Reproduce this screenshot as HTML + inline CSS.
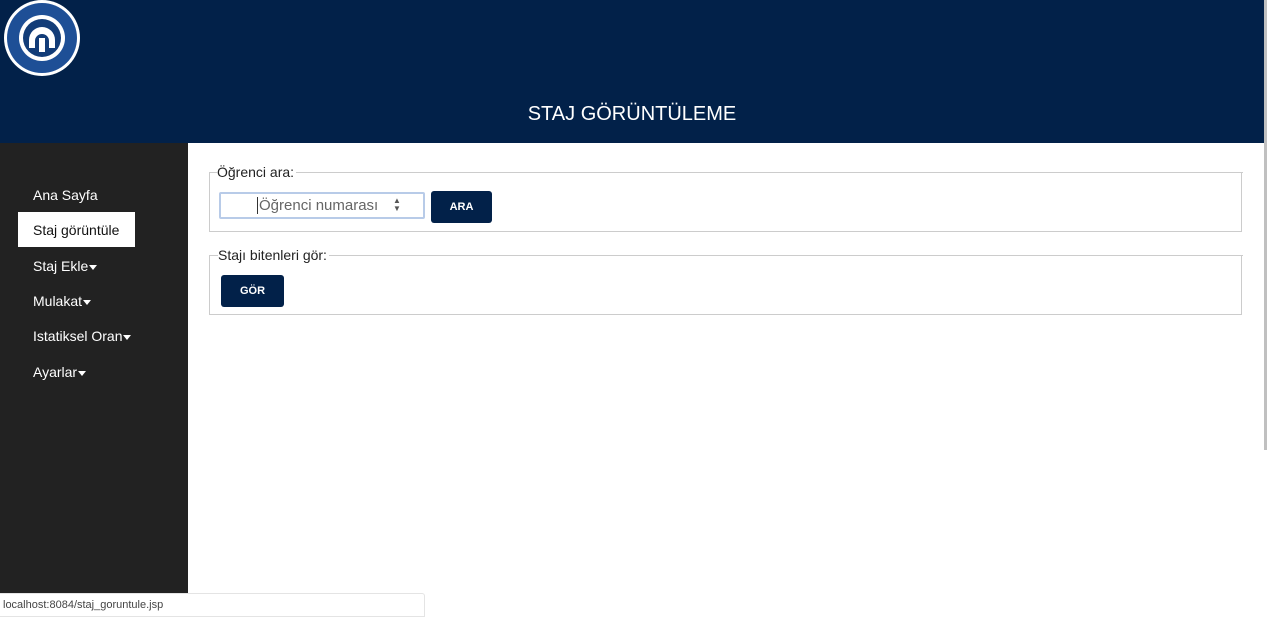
<!DOCTYPE html>
<html><head><meta charset="utf-8"><style>
*{margin:0;padding:0;box-sizing:border-box}
body{width:1278px;height:617px;overflow:hidden;background:#fff;font-family:"Liberation Sans",Arial,sans-serif;position:relative}
.hdr{position:absolute;left:0;top:0;width:1264px;height:143px;background:#022149}
.hdr h1{position:absolute;top:103px;left:0;width:1264px;text-align:center;color:#fff;font-weight:normal;font-size:20px}
.side{position:absolute;left:0;top:143px;width:188px;height:474px;background:#222}
.side div{position:absolute;left:33px;color:#fff;font-size:14px}
.side .act{left:18px;width:117px;height:35px;background:#fff;color:#111;padding:10px 0 0 15px}
.tri{display:inline-block;width:0;height:0;border-left:4.5px solid transparent;border-right:4.5px solid transparent;border-top:5px solid #fff;vertical-align:middle;margin-left:1px}
fieldset{position:absolute;left:209px;width:1033px;border:1px solid #ccc;border-top:none}
.fs1{top:172px;height:60px}.fs2{top:255px;height:60px}
.lg{position:absolute;font-size:14px;color:#222;background:#fff;padding-right:2px}
.line{position:absolute;height:1px;background:#ccc}
.btn{position:absolute;background:#022149;color:#fff;font-weight:bold;font-size:11px;border-radius:3px;text-align:center}
.inp{position:absolute;left:219px;top:192px;width:206px;height:27px;border:2px solid #b8cbe8;border-radius:2px;background:#fff}
.scroll{position:absolute;left:1264px;top:0;width:3px;height:450px;background:#c0c0c0}
.status{position:absolute;left:0;top:593px;width:425px;height:24px;background:#fff;border:1px solid #e4e4e4;border-left:none;border-radius:0 3px 0 0;font-size:11px;color:#444;padding:5px 0 0 3px}
</style></head><body>
<div class="hdr">
<svg width="80" height="80" style="position:absolute;left:2px;top:0" viewBox="0 0 80 80">
<circle cx="40" cy="38" r="38" fill="#fff"/>
<circle cx="40" cy="38" r="35" fill="#1e4f96"/>
<circle cx="40" cy="38" r="23" fill="#fff"/>
<circle cx="40" cy="38" r="19" fill="#123c78"/>
<path d="M27 48 V40 A13 13 0 0 1 53 40 V48 H47 V41 A7 7 0 0 0 33 41 V48Z" fill="#fff"/>
<rect x="37" y="38" width="6" height="14" fill="#fff"/>
</svg>
<h1>STAJ GÖRÜNTÜLEME</h1>
</div>
<div class="scroll"></div>
<div class="side">
<div style="top:44px">Ana Sayfa</div>
<div class="act" style="top:69px">Staj görüntüle</div>
<div style="top:115px">Staj Ekle<span class="tri"></span></div>
<div style="top:150px">Mulakat<span class="tri"></span></div>
<div style="top:185px">Istatiksel Oran<span class="tri"></span></div>
<div style="top:221px">Ayarlar<span class="tri"></span></div>
</div>
<fieldset class="fs1"></fieldset>
<div class="line" style="left:209px;top:172px;width:1034px"></div>
<div class="lg" style="left:217px;top:164px">Öğrenci ara:</div>
<div class="inp"><span style="position:absolute;left:36px;top:3px;font-size:15px;color:#666;border-left:1px solid #333;padding-left:1px">Öğrenci numarası</span><span style="position:absolute;left:172px;top:3px;font-size:8px;color:#555;line-height:8px">▲<br>▼</span></div>
<div class="btn" style="left:431px;top:191px;width:61px;height:32px;line-height:32px">ARA</div>
<fieldset class="fs2"></fieldset>
<div class="line" style="left:209px;top:255px;width:1034px"></div>
<div class="lg" style="left:218px;top:247px">Stajı bitenleri gör:</div>
<div class="btn" style="left:221px;top:275px;width:63px;height:32px;line-height:32px">GÖR</div>
<div class="status">localhost:8084/staj_goruntule.jsp</div>
</body></html>
